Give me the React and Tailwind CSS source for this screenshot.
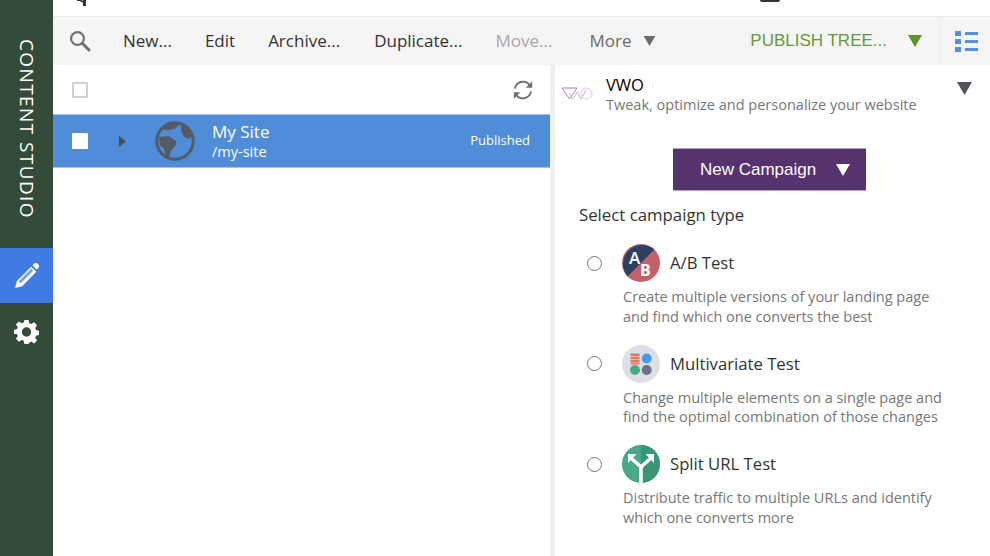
import React from "react";

const Tri = ({ className }) => (
  <svg viewBox="0 0 14 12" className={className} fill="currentColor"><path d="M0 0h14L7 12z" /></svg>
);

const Search = () => (
  <svg viewBox="0 0 22 22" className="w-[22px] h-[22px] text-[#6f7173]" fill="none" stroke="currentColor">
    <circle cx="8.5" cy="8.5" r="6.4" strokeWidth="2.2" />
    <path d="M13.5 13.5 20 20" strokeWidth="3" strokeLinecap="round" />
  </svg>
);

const Globe = () => (
  <svg viewBox="0 0 40 40" className="w-[40px] h-[40px]">
    <circle cx="20" cy="20" r="18.2" fill="none" stroke="#555b66" strokeWidth="3" />
    <path d="M4 16 L13 15 Q18 17 21 20 L21 24 L16 30 L14 36 L11 37 L9 28 L5 25z" fill="#555b66" />
    <path d="M9 5 Q16 2 24 3 L20 8 L13 9 L9 9z" fill="#555b66" />
    <path d="M26 4 Q34 7 37 15 L34 18 L29 16 L26 10z" fill="#555b66" />
  </svg>
);

const Refresh = () => (
  <svg viewBox="0 0 24 24" className="w-[22px] h-[22px] text-[#6e7073]" fill="none" stroke="currentColor" strokeWidth="2">
    <path d="M3.2 10.5A9 9 0 0 1 19 6.2l2.5 2.3" />
    <path d="M20.8 13.5A9 9 0 0 1 5 17.8l-2.5-2.3" />
    <path d="M22 2.5v7h-7z" fill="currentColor" stroke="none" />
    <path d="M2 21.5v-7h7z" fill="currentColor" stroke="none" />
  </svg>
);

const VwoLogo = () => (
  <svg viewBox="0 0 32 13" className="w-[32px] h-[13px]" fill="none" strokeWidth="1">
    <path d="M1 1h15L8.500 12z" stroke="#a889b8" />
    <path d="M8 6l4 6 4-7 4 7 5-9" stroke="#c9b3d3" />
    <circle cx="25.500" cy="6.500" r="5.500" stroke="#d8c9df" />
  </svg>
);

const AbIcon = () => (
  <svg viewBox="0 0 38 38" className="w-[38px] h-[38px] shrink-0">
    <circle cx="19" cy="19" r="19" fill="#c2606b" />
    <path d="M32.4 5.600A19 19 0 0 0 5.600 32.400z" fill="#2f3f60" />
    <text x="7" y="20" fontSize="17" fontWeight="600" fill="#fff" fontFamily="Open Sans, sans-serif">A</text>
    <text x="18" y="32" fontSize="16" fontWeight="700" fill="#fff" fontFamily="Open Sans, sans-serif">B</text>
  </svg>
);

const MvIcon = () => (
  <svg viewBox="0 0 38 38" className="w-[38px] h-[38px] shrink-0">
    <circle cx="19" cy="19" r="19" fill="#dcdfe6" />
    <path d="M8.500 8.500h9v2.500h-9zM8.500 11.700h9v2.500h-9zM8.500 14.900h9v2.500h-9zM8.500 18.100h9v1.400h-9z" fill="#e8765a" />
    <circle cx="24.700" cy="13.500" r="5" fill="#4a9be0" />
    <circle cx="13" cy="25" r="5" fill="#46ab85" />
    <circle cx="24.700" cy="25" r="5" fill="#6a7285" />
  </svg>
);

const SplitIcon = () => (
  <svg viewBox="0 0 38 38" className="w-[38px] h-[38px] shrink-0">
    <circle cx="19" cy="19" r="19" fill="#48a888" />
    <path d="M19 0a19 19 0 0 1 0 38z" fill="#3b9476" />
    <path d="M19 38V22L9 13M19 22l10-9" fill="none" stroke="#fff" strokeWidth="3.500" />
    <path d="M6 9h8.500L6 18zM32 9h-8.500L32 18z" fill="#fff" />
  </svg>
);

const campaigns = [
  { icon: <AbIcon />, title: "A/B Test", lines: ["Create multiple versions of your landing page", "and find which one converts the best"] },
  { icon: <MvIcon />, title: "Multivariate Test", lines: ["Change multiple elements on a single page and", "find the optimal combination of those changes"] },
  { icon: <SplitIcon />, title: "Split URL Test", lines: ["Distribute traffic to multiple URLs and identify", "which one converts more"] },
];

export default function App() {
  return (
    <div className="w-[990px] h-[556px] overflow-hidden flex bg-white text-[#333] font-['Open_Sans','Noto_Sans',sans-serif]">
      {/* Sidebar */}
      <aside className="w-[53px] shrink-0 bg-[#344b3a] flex flex-col items-stretch">
        <div className="h-[248px] flex justify-center pt-[39px]">
          <span className="[writing-mode:vertical-rl] text-white text-[19px] leading-[20px] tracking-[1.4px] whitespace-nowrap h-[180px]">CONTENT STUDIO</span>
        </div>
        <div className="h-[55px] bg-[#3f7be3] flex items-center justify-center">
          <svg viewBox="0 0 24 24" className="w-[25px] h-[25px]" fill="#fff">
            <path d="M1 24l1.800-6.800L16.500 3.500l5 5L7.800 22.200z" />
            <path d="M17.800 2.200l1.500-1.500a2.400 2.400 0 0 1 3.300 0l.7.7a2.400 2.400 0 0 1 0 3.300l-1.500 1.500z" />
            <path d="M4.500 17.500l2 2 12-12-2-2z" fill="#3f7be3" opacity="0.7" />
          </svg>
        </div>
        <div className="flex justify-center pt-[16px]">
          <svg viewBox="0 0 24 24" className="w-[25px] h-[25px]" fill="#fff" fillRule="evenodd">
            <path d="M10 1h4l.7 3.100 1.900.8L19.300 3.200l2.800 2.800-1.700 2.700.8 1.900 3.100.7v4l-3.100.7-.8 1.900 1.700 2.700-2.800 2.800-2.700-1.700-1.900.8L14 24h-4l-.7-3.100-1.900-.8-2.700 1.700-2.800-2.800 1.700-2.700-.8-1.900L-.3 14.500v-4l3.100-.7.8-1.900L1.900 5.200 4.700 2.400l2.700 1.700 1.900-.8zM12 8a4.500 4.500 0 1 0 0 9 4.500 4.500 0 0 0 0-9z" />
          </svg>
        </div>
      </aside>

      <main className="flex-1 min-w-0 flex flex-col">
        {/* Top strip */}
        <div className="h-[17px] shrink-0 border-b border-[#e9e9e9] overflow-hidden flex items-start">
          <div className="ml-[24px] -mt-[1px] w-[14px] h-[7px] overflow-hidden">
            <svg viewBox="0 0 14 7" className="w-[14px] h-[7px]" fill="#333"><path d="M0 0h3l3 2V0h3v7H6V4L3 2H0z" /></svg>
          </div>
          <div className="ml-[669px] w-[20px] h-[2px] bg-[#333] rounded-b-[2px]" />
        </div>

        {/* Toolbar */}
        <div className="h-[48px] shrink-0 bg-[#f5f5f5] flex items-center text-[17px]">
          <div className="pl-[16px] w-[70px] flex items-center"><Search /></div>
          <span className="text-[#333]">New...</span>
          <span className="ml-[33px] text-[#333]">Edit</span>
          <span className="ml-[33px] text-[#333]">Archive...</span>
          <span className="ml-[34px] text-[#333]">Duplicate...</span>
          <span className="ml-[33px] text-[#a8a8a8]">Move...</span>
          <span className="ml-[37px] text-[#6b6b6b]">More</span>
          <Tri className="ml-[12px] w-[13px] h-[10px] text-[#6b6b6b]" />
          <span className="ml-auto font-['Liberation_Sans',sans-serif] text-[#67983a] text-[17px]">PUBLISH TREE...</span>
          <Tri className="ml-[21px] w-[14px] h-[12px] text-[#5f9228]" />
          <div className="ml-[18px] w-[50px] h-full border-l border-[#eeeeee] flex flex-col justify-center gap-[3px] pl-[14px]">
            {[0, 1, 2].map((i) => (
              <div key={i} className="flex gap-[4px]">
                <div className="w-[6px] h-[5px] bg-[#5b8fde]" />
                <div className="w-[13px] h-[3px] mt-[1px] bg-[#5b8fde]" />
              </div>
            ))}
          </div>
        </div>

        <div className="flex-1 flex min-h-0">
          {/* Tree */}
          <section className="w-[497px] shrink-0 flex flex-col">
            <div className="h-[49px] flex items-center pl-[19px] pr-[16px] justify-between">
              <div className="w-[16px] h-[16px] border-2 border-[#d0d0d0]" />
              <Refresh />
            </div>
            <div className="h-[54px] bg-[#4f8dd9] border-y border-[#9fc3ec] flex items-center pl-[19px] pr-[20px]">
              <div className="w-[16px] h-[16px] bg-white" />
              <svg viewBox="0 0 7 11" className="ml-[31px] w-[7px] h-[11px] text-[#474d57]" fill="currentColor"><path d="M0 0l7 5.500L0 11z" /></svg>
              <div className="ml-[29px]"><Globe /></div>
              <div className="ml-[17px] text-white">
                <div className="text-[17px] leading-[22px]">My Site</div>
                <div className="text-[14.5px] leading-[18px]">/my-site</div>
              </div>
              <span className="ml-auto text-white text-[13px]">Published</span>
            </div>
          </section>

          {/* Divider */}
          <div className="w-[5px] shrink-0 bg-[#f0f0f0]" />

          {/* Details */}
          <section className="flex-1 min-w-0 flex flex-col">
            <div className="flex items-start pl-[6px] pr-[18px] pt-[10px]">
              <div className="pt-[12px]"><VwoLogo /></div>
              <div className="ml-[13px]">
                <div className="text-[16.5px] leading-[20px] text-black">VWO</div>
                <div className="text-[14.5px] leading-[20px] text-[#777]">Tweak, optimize and personalize your website</div>
              </div>
              <Tri className="ml-auto mt-[7px] w-[15px] h-[13px] text-[#50555c]" />
            </div>
            <div className="mt-[33px] ml-[118px] w-[193px] h-[43px] bg-[#56336f] border-y border-[#b9a0c9] flex items-center pl-[27px] pt-[1px] text-white font-['Liberation_Sans',sans-serif] text-[17px]">
              <span>New Campaign</span>
              <Tri className="ml-[20px] w-[14px] h-[12px] text-white" />
            </div>
            <div className="mt-[13px] ml-[24px] text-[16.8px] leading-[22px] text-[#333]">Select campaign type</div>
            <div className="mt-[18px] flex flex-col gap-[18.5px]">
              {campaigns.map((c) => (
                <div key={c.title} className="pl-[32px]">
                  <div className="flex items-center h-[38px]">
                    <div className="w-[15px] h-[15px] rounded-full border border-[#777] bg-white shrink-0" />
                    <div className="ml-[20px]">{c.icon}</div>
                    <span className="ml-[10px] text-[16.7px] text-[#333]">{c.title}</span>
                  </div>
                  <div className="ml-[36px] mt-[5px] text-[14.5px] leading-[19.5px] text-[#777] whitespace-nowrap">
                    {c.lines.map((l) => <div key={l}>{l}</div>)}
                  </div>
                </div>
              ))}
            </div>
          </section>
        </div>
      </main>
    </div>
  );
}
